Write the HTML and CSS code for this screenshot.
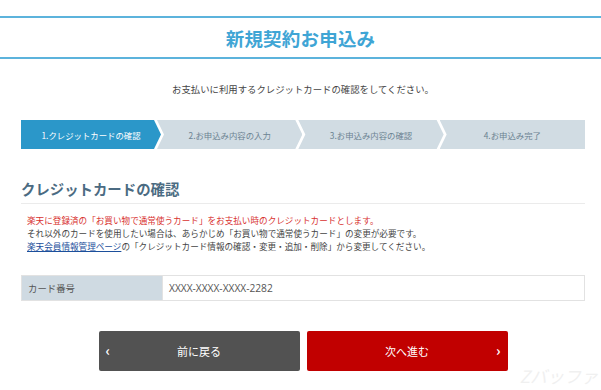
FILE: index.html
```html
<!DOCTYPE html>
<html lang="ja">

<head>
    <meta charset="UTF-8">
    <meta name="viewport" content="width=device-width, initial-scale=1.0">
    <title>新規契約お申込み</title>
    <link rel="stylesheet" href="styles.css">
</head>

<body>
    <div id="page">
        <header class="page-head">
            <h1>新規契約お申込み</h1>
        </header>

        <p class="lead">お支払いに利用するクレジットカードの確認をしてください。</p>

        <ol class="steps">
            <li class="step first current">1.クレジットカードの確認</li>
            <li class="step">2.お申込み内容の入力</li>
            <li class="step">3.お申込み内容の確認</li>
            <li class="step last">4.お申込み完了</li>
        </ol>

        <h2 class="sec-title">クレジットカードの確認</h2>

        <div class="notice">
            <p class="warn">楽天に登録済の「お買い物で通常使うカード」をお支払い時のクレジットカードとします。</p>
            <p>それ以外のカードを使用したい場合は、あらかじめ「お買い物で通常使うカード」の変更が必要です。</p>
            <p><a href="#">楽天会員情報管理ページ</a>の「クレジットカード情報の確認・変更・追加・削除」から変更してください。</p>
        </div>

        <table class="card-table">
            <tr>
                <th>カード番号</th>
                <td>XXXX-XXXX-XXXX-2282</td>
            </tr>
        </table>

        <div class="buttons">
            <a href="#" class="btn back"><span class="arrow">&lsaquo;</span>前に戻る</a>
            <a href="#" class="btn next">次へ進む<span class="arrow">&rsaquo;</span></a>
        </div>

        <span class="mark">Zバッファ</span>
    </div>
</body>

</html>
```

FILE: styles.css
```css
* {
    margin: 0;
    padding: 0;
    box-sizing: border-box;
}

body {
    background: #fff;
    font-family: "Noto Sans CJK JP", sans-serif;
    color: #444;
}

#page {
    position: relative;
    width: 601px;
    height: 390px;
    overflow: hidden;
    padding: 16px 16px 0 21px;
}

.page-head {
    margin: 0 -16px 0 -21px;
    height: 43px;
    border-top: 2px solid #5cb3dc;
    border-bottom: 2px solid #5cb3dc;
    display: flex;
    align-items: center;
    justify-content: center;
}

.page-head h1 {
    font-size: 18.5px;
    line-height: 20px;
    font-weight: 700;
    color: #3fa5d5;
    letter-spacing: 0.2px;
}

.lead {
    margin-top: 23px;
    text-align: center;
    font-size: 9.4px;
    line-height: 14px;
    color: #444;
}

/* progress steps */
.steps {
    list-style: none;
    display: flex;
    margin-top: 24px;
    height: 29px;
}

.step {
    flex: 1;
    margin-left: -4px;
    display: flex;
    align-items: center;
    justify-content: center;
    background: #d1dce3;
    color: #6c8392;
    font-size: 8.4px;
    clip-path: polygon(0 0, calc(100% - 7px) 0, 100% 50%, calc(100% - 7px) 100%, 0 100%, 7px 50%);
}

.step.first {
    flex: 0 0 140px;
    margin-left: 0;
    clip-path: polygon(0 0, calc(100% - 7px) 0, 100% 50%, calc(100% - 7px) 100%, 0 100%);
}

.step.last {
    clip-path: polygon(0 0, 100% 0, 100% 100%, 0 100%, 7px 50%);
}

.step.current {
    background: #2b97c9;
    color: #fff;
}

.sec-title {
    margin-top: 30px;
    font-size: 14.4px;
    line-height: 20px;
    font-weight: 700;
    color: #4b6b82;
    padding-bottom: 4px;
    border-bottom: 1px solid #ebebeb;
}

.notice {
    margin-top: 10px;
    padding-left: 6px;
    font-size: 8.6px;
    line-height: 13px;
    color: #444;
}

.notice .warn {
    color: #d8322f;
}

.notice a {
    color: #1c4f9b;
    text-decoration: underline;
}

.card-table {
    margin-top: 22px;
    width: 100%;
    border-collapse: collapse;
}

.card-table th,
.card-table td {
    height: 25px;
    border: 1px solid #e2e2e2;
    text-align: left;
    font-weight: 400;
}

.card-table th {
    width: 141px;
    background: #cfdae2;
    padding-left: 6px;
    font-size: 9.4px;
    color: #555;
}

.card-table td {
    padding-left: 6px;
    font-family: "Open Sans", "Noto Sans CJK JP", sans-serif;
    font-size: 10.2px;
    color: #555;
}

.buttons {
    margin-top: 30px;
    display: flex;
    justify-content: center;
    gap: 7px;
}

.btn {
    position: relative;
    width: 201px;
    height: 40px;
    display: flex;
    align-items: center;
    justify-content: center;
    border-radius: 2px;
    color: #fff;
    text-decoration: none;
    font-size: 11px;
}

.btn.back {
    background: #525252;
}

.btn.next {
    background: #c10000;
}

.btn .arrow {
    position: absolute;
    top: 11px;
    font-size: 14px;
    line-height: 16px;
    font-weight: 700;
}

.back .arrow {
    left: 7px;
}

.next .arrow {
    right: 7px;
}

/* faint watermark in the corner */
.mark {
    position: absolute;
    right: 3px;
    bottom: 3px;
    font-size: 17px;
    line-height: 22px;
    font-style: italic;
    color: #f0f0f0;
}
```
